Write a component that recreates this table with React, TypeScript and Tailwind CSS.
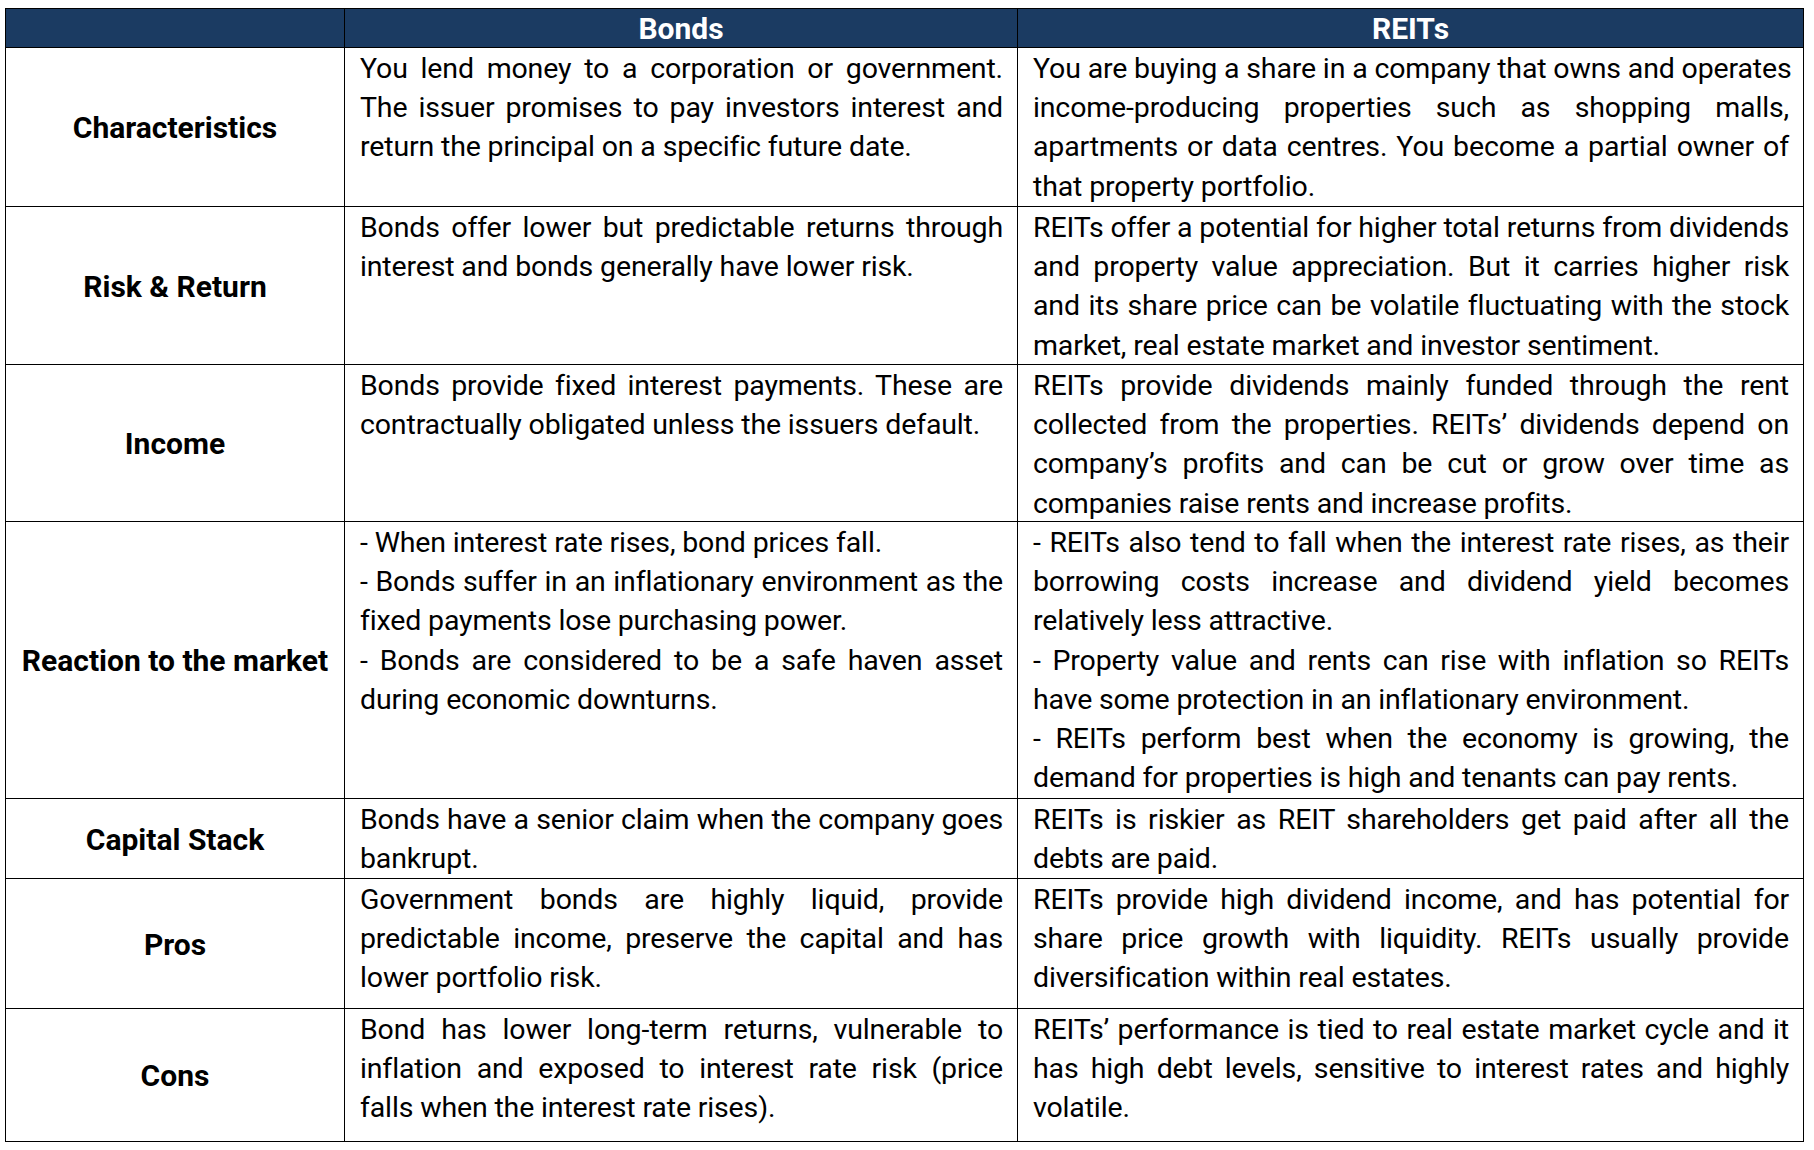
import React from "react";

type Line = [string, boolean]; // [text, justified]

const rows: { label: string; bonds: Line[]; reits: Line[] }[] = [
  {
    label: "Characteristics",
    bonds: [
      ["You lend money to a corporation or government.", true],
      ["The issuer promises to pay investors interest and", true],
      ["return the principal on a specific future date.", false],
    ],
    reits: [
      ["You are buying a share in a company that owns and operates", true],
      ["income-producing properties such as shopping malls,", true],
      ["apartments or data centres. You become a partial owner of", true],
      ["that property portfolio.", false],
    ],
  },
  {
    label: "Risk & Return",
    bonds: [
      ["Bonds offer lower but predictable returns through", true],
      ["interest and bonds generally have lower risk.", false],
    ],
    reits: [
      ["REITs offer a potential for higher total returns from dividends", true],
      ["and property value appreciation. But it carries higher risk", true],
      ["and its share price can be volatile fluctuating with the stock", true],
      ["market, real estate market and investor sentiment.", false],
    ],
  },
  {
    label: "Income",
    bonds: [
      ["Bonds provide fixed interest payments. These are", true],
      ["contractually obligated unless the issuers default.", false],
    ],
    reits: [
      ["REITs provide dividends mainly funded through the rent", true],
      ["collected from the properties. REITs\u2019 dividends depend on", true],
      ["company\u2019s profits and can be cut or grow over time as", true],
      ["companies raise rents and increase profits.", false],
    ],
  },
  {
    label: "Reaction to the market",
    bonds: [
      ["- When interest rate rises, bond prices fall.", false],
      ["- Bonds suffer in an inflationary environment as the", true],
      ["fixed payments lose purchasing power.", false],
      ["- Bonds are considered to be a safe haven asset", true],
      ["during economic downturns.", false],
    ],
    reits: [
      ["- REITs also tend to fall when the interest rate rises, as their", true],
      ["borrowing costs increase and dividend yield becomes", true],
      ["relatively less attractive.", false],
      ["- Property value and rents can rise with inflation so REITs", true],
      ["have some protection in an inflationary environment.", false],
      ["- REITs perform best when the economy is growing, the", true],
      ["demand for properties is high and tenants can pay rents.", false],
    ],
  },
  {
    label: "Capital Stack",
    bonds: [
      ["Bonds have a senior claim when the company goes", true],
      ["bankrupt.", false],
    ],
    reits: [
      ["REITs is riskier as REIT shareholders get paid after all the", true],
      ["debts are paid.", false],
    ],
  },
  {
    label: "Pros",
    bonds: [
      ["Government bonds are highly liquid, provide", true],
      ["predictable income, preserve the capital and has", true],
      ["lower portfolio risk.", false],
    ],
    reits: [
      ["REITs provide high dividend income, and has potential for", true],
      ["share price growth with liquidity. REITs usually provide", true],
      ["diversification within real estates.", false],
    ],
  },
  {
    label: "Cons",
    bonds: [
      ["Bond has lower long-term returns, vulnerable to", true],
      ["inflation and exposed to interest rate risk (price", true],
      ["falls when the interest rate rises).", false],
    ],
    reits: [
      ["REITs\u2019 performance is tied to real estate market cycle and it", true],
      ["has high debt levels, sensitive to interest rates and highly", true],
      ["volatile.", false],
    ],
  },
];

function Lines({ lines }: { lines: Line[] }) {
  return (
    <>
      {lines.map(([t, j], i) =>
        j ? (
          <div key={i} className="whitespace-nowrap text-justify [text-align-last:justify]">
            {t}
          </div>
        ) : (
          <div key={i} className="whitespace-nowrap text-left">
            {t}
          </div>
        )
      )}
    </>
  );
}

export default function App() {
  return (
    <div className="w-[1814px] h-[1150px] bg-white pt-[8px] pl-[5px] font-['Roboto',sans-serif] text-black">
      <div className="grid w-fit gap-px bg-black p-px grid-cols-[338px_672px_785px] grid-rows-[38px_158px_157px_156px_276px_79px_129px_132px]">
        <div className="bg-[#1b3b62]" />
        <div className="bg-[#1b3b62] flex items-center justify-center pt-[2px] text-white font-bold text-[30px] leading-none">
          Bonds
        </div>
        <div className="bg-[#1b3b62] flex items-center justify-center pt-[2px] text-white font-bold text-[30px] leading-none">
          REITs
        </div>
        {rows.map((r) => (
          <React.Fragment key={r.label}>
            <div className="bg-white flex items-center justify-center pt-[2px] font-bold text-[30px] leading-none">
              {r.label}
            </div>
            <div className="bg-white pt-px pl-[15px] pr-[14px] text-[28.5px] tracking-[-0.15px] leading-[39.2px]">
              <Lines lines={r.bonds} />
            </div>
            <div className="bg-white pt-px pl-[15px] pr-[14px] text-[28.5px] tracking-[-0.15px] leading-[39.2px]">
              <Lines lines={r.reits} />
            </div>
          </React.Fragment>
        ))}
      </div>
    </div>
  );
}
